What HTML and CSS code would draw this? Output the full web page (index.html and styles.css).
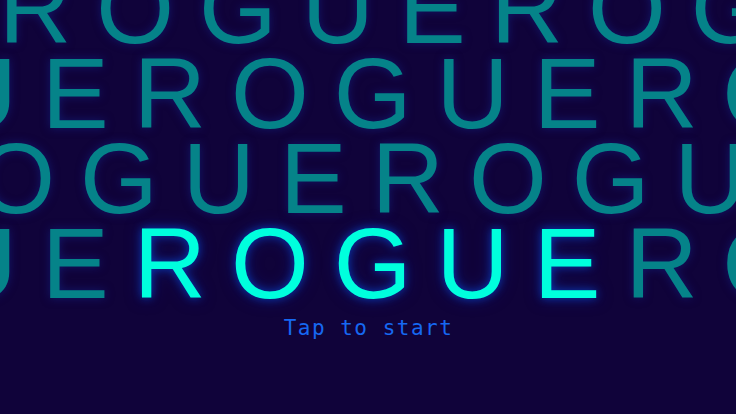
FILE: index.html
```html
<!DOCTYPE html>
<html lang="en">
<head>
<meta charset="utf-8">
<title>Rogue</title>
<link rel="stylesheet" href="styles.css">
</head>
<body>
<main class="screen">
  <div class="wall">
    <div class="row row-1">ROGUEROGUEROGUE</div>
    <div class="row row-2">ROGUEROGUEROGUE</div>
    <div class="row row-3">ROGUEROGUEROGUE</div>
    <div class="row row-4">ROGUE<span class="hot">ROGUE</span>ROGUE</div>
  </div>
  <p class="tap">Tap to start</p>
</main>
</body>
</html>
```
FILE: styles.css
```css
html, body {
  margin: 0;
  padding: 0;
  background: #10033a;
}

.screen {
  width: 736px;
  height: 414px;
  overflow: hidden;
  background: #10033a;
  display: flex;
  flex-direction: column;
}

.wall {
  margin-top: -34px;
  display: flex;
  flex-direction: column;
}

.row {
  font-family: "Liberation Sans", Arial, sans-serif;
  font-size: 100px;
  line-height: 85px;
  height: 85px;
  letter-spacing: 25px;
  white-space: nowrap;
  color: #058389;
  text-shadow: 0 0 10px rgba(20, 40, 150, 0.55);
}

.row-1 { margin-left: -1px; }
.row-2 { margin-left: -358px; }
.row-3 { margin-left: -120px; }
.row-4 { margin-left: -358px; }

.hot {
  color: #00ffdd;
  text-shadow: 0 0 8px rgba(10, 70, 210, 0.75), 0 0 16px rgba(10, 50, 180, 0.5);
}

.tap {
  margin: 10px 0 0;
  font-family: "DejaVu Sans Mono", monospace;
  font-size: 21px;
  line-height: 24px;
  letter-spacing: 1.5px;
  color: #1668f2;
  text-align: center;
  padding-left: 1px;
}
```
